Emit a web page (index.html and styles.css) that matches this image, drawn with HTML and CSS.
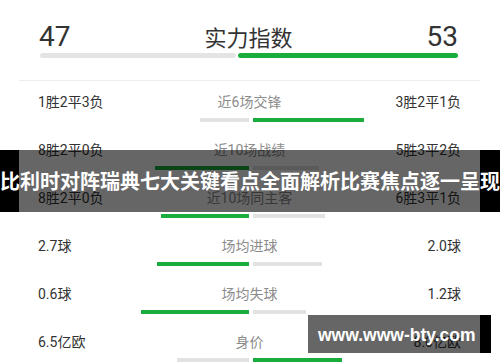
FILE: index.html
```html
<!DOCTYPE html>
<html lang="zh-CN">
<head>
<meta charset="utf-8">
<title>实力指数</title>
<link rel="stylesheet" href="styles.css">
</head>
<body>
<div class="page">
  <div class="card">
    <section class="summary">
      <div class="summary-head">
        <span class="score">47</span>
        <span class="summary-title">实力指数</span>
        <span class="score">53</span>
      </div>
      <div class="summary-bar">
        <span class="seg seg-gray" style="flex:47"></span>
        <span class="seg seg-green" style="flex:53"></span>
      </div>
    </section>
    <ul class="rows">
      <li class="row">
        <div class="row-text"><span class="val">1胜2平3负</span><span class="label">近6场交锋</span><span class="val val-right">3胜2平1负</span></div>
        <div class="row-bars"><div class="half half-left"><span class="bar bar-gray" style="width:49px"></span></div><div class="half"><span class="bar bar-green" style="width:111px"></span></div></div>
      </li>
      <li class="row">
        <div class="row-text"><span class="val">8胜2平0负</span><span class="label">近10场战绩</span><span class="val val-right">5胜3平2负</span></div>
        <div class="row-bars"><div class="half half-left"><span class="bar bar-green" style="width:94px"></span></div><div class="half"><span class="bar bar-gray" style="width:66px"></span></div></div>
      </li>
      <li class="row">
        <div class="row-text"><span class="val">8胜2平0负</span><span class="label">近10场同主客</span><span class="val val-right">6胜3平1负</span></div>
        <div class="row-bars"><div class="half half-left"><span class="bar bar-green" style="width:88px"></span></div><div class="half"><span class="bar bar-gray" style="width:72px"></span></div></div>
      </li>
      <li class="row">
        <div class="row-text"><span class="val">2.7球</span><span class="label">场均进球</span><span class="val val-right">2.0球</span></div>
        <div class="row-bars"><div class="half half-left"><span class="bar bar-green" style="width:92px"></span></div><div class="half"><span class="bar bar-gray" style="width:69px"></span></div></div>
      </li>
      <li class="row">
        <div class="row-text"><span class="val">0.6球</span><span class="label">场均失球</span><span class="val val-right">1.2球</span></div>
        <div class="row-bars"><div class="half half-left"><span class="bar bar-green" style="width:108px"></span></div><div class="half"><span class="bar bar-gray" style="width:53px"></span></div></div>
      </li>
      <li class="row">
        <div class="row-text"><span class="val">6.5亿欧</span><span class="label">身价</span><span class="val val-right">8.0亿欧</span></div>
        <div class="row-bars"><div class="half half-left"><span class="bar bar-gray" style="width:72px"></span></div><div class="half"><span class="bar bar-green" style="width:89px"></span></div></div>
      </li>
    </ul>
  </div>

  <div class="headline">
    <span class="band-edge band-edge-left"></span>
    <span class="band-mid"></span>
    <span class="band-edge band-edge-right"></span>
    <h1 class="headline-text">比利时对阵瑞典七大关键看点全面解析比赛焦点逐一呈现</h1>
  </div>

  <div class="watermark">
    <span class="wm-text">www.www-bty.com</span>
    <span class="wm-edge"></span>
  </div>
</div>
</body>
</html>
```

FILE: styles.css
```css
html, body {
  margin: 0;
  padding: 0;
  background: #ffffff;
}

body {
  font-family: Roboto, "Noto Sans CJK SC", sans-serif;
  color: #333333;
}

.page {
  position: relative;
  width: 500px;
  height: 362px;
  overflow: hidden;
  background: #ffffff;
}

.card {
  padding: 0 20px 0 19px;
}

/* summary block */
.summary {
  padding: 20px 22px 22px 20px;
  border-bottom: 1px solid #ededed;
}

.summary-head {
  display: flex;
  justify-content: space-between;
  align-items: baseline;
  font-size: 28px;
  line-height: 32px;
  color: #333333;
}

.score {
  font-family: Roboto, sans-serif;
  font-weight: 400;
}

.summary-title {
  font-family: "Noto Sans CJK SC", sans-serif;
  font-size: 22px;
  color: #333333;
}

.summary-bar {
  display: flex;
  gap: 2px;
  height: 5px;
  margin-left: 1px;
}

.seg {
  display: block;
  height: 100%;
  border-radius: 3px;
}

.seg-gray { background: #e4e4e4; }
.seg-green { background: #1aad3b; }

/* rows */
.rows {
  list-style: none;
  margin: 0;
  padding: 0;
}

.row {
  padding: 11px 19px 7px 19px;
}

.row-text {
  display: grid;
  grid-template-columns: 1fr auto 1fr;
  align-items: center;
  font-size: 14px;
  line-height: 20px;
}

.val {
  color: #333333;
  white-space: nowrap;
}

.val-right {
  text-align: right;
}

.label {
  color: #8c8c8c;
  text-align: center;
  white-space: nowrap;
}

.row-bars {
  display: grid;
  grid-template-columns: 1fr 1fr;
  gap: 4px;
  padding-left: 3px;
  margin-top: 6px;
  height: 4px;
}

.half {
  display: flex;
  justify-content: flex-start;
}

.half-left {
  justify-content: flex-end;
}

.bar {
  display: block;
  height: 4px;
}

.bar-gray { background: #e2e2e2; }
.bar-green { background: #1aad3b; }

/* headline overlay */
.headline {
  position: absolute;
  left: 0;
  top: 150px;
  width: 500px;
  height: 62px;
  display: flex;
}

.band-edge {
  display: block;
  background: #000000;
}

.band-edge-left { width: 19px; }
.band-edge-right { width: 20px; }

.band-mid {
  display: block;
  flex: 1;
  background: rgba(0, 0, 0, 0.6);
}

.headline-text {
  position: absolute;
  inset: 0;
  margin: 0;
  display: flex;
  align-items: center;
  justify-content: center;
  white-space: nowrap;
  font-family: "Noto Sans CJK SC", sans-serif;
  font-size: 20px;
  font-weight: 700;
  color: #ffffff;
  line-height: 1;
}

/* watermark overlay */
.watermark {
  position: absolute;
  left: 308px;
  top: 315px;
  height: 38px;
  display: flex;
}

.wm-text {
  display: block;
  width: 162px;
  padding: 9px 0 0 10px;
  background: rgba(0, 0, 0, 0.6);
  font-family: "Liberation Sans", Arial, sans-serif;
  font-weight: 700;
  font-size: 17.5px;
  line-height: 22px;
  color: #ffffff;
  white-space: nowrap;
}

.wm-edge {
  display: block;
  width: 11px;
  background: #000000;
}
```
